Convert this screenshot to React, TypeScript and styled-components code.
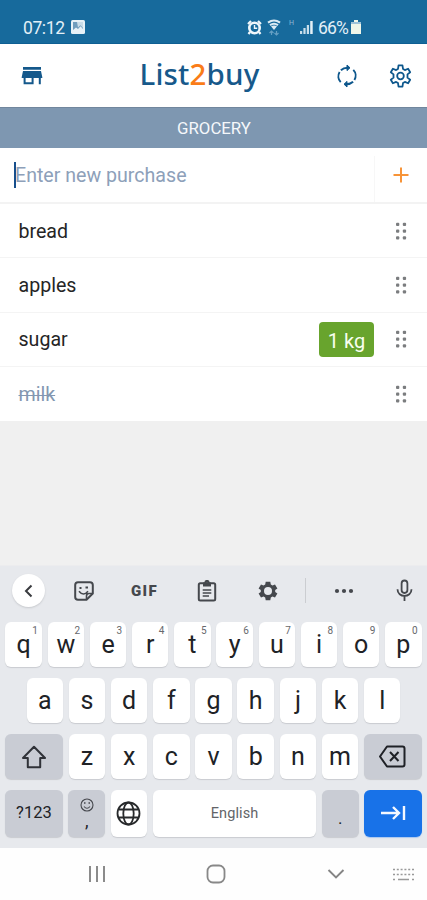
import React from 'react';
import styled, { createGlobalStyle } from 'styled-components';

const GlobalStyle = createGlobalStyle`
  * { box-sizing: border-box; }
  html, body { margin: 0; padding: 0; }
  body { font-family: Roboto, "Liberation Sans", sans-serif; background: #f0f0f0; }
  svg { display: block; flex-shrink: 0; }
`;

const Screen = styled.div`
  width: 427px;
  height: 900px;
  display: flex;
  flex-direction: column;
  overflow: hidden;
  background: #f0f0f0;
`;

const StatusBar = styled.div`
  height: 44px;
  flex-shrink: 0;
  display: flex;
  align-items: center;
  padding: 11px 66px 0 23px;
  background: #176a9c;
  border-bottom: 1px solid #0e5f93;
  color: #e3f0f7;
  font-size: 18px;
`;

const Clock = styled.span`
  width: 48px;
  padding-top: 1px;
  letter-spacing: -0.4px;
  font-size: 17.5px;
`;

const StatusIcons = styled.div`
  margin-left: auto;
  display: flex;
  align-items: center;
`;

const AlarmIcon = styled.svg`
  margin-right: 5px;
`;

const Network = styled.span`
  width: 13px;
  margin-left: 4px;
  margin-right: 2px;
  padding-bottom: 8px;
  text-align: center;
  font-size: 7px;
  color: #8fb8d2;
`;

const Percent = styled.span`
  margin-left: 4px;
  width: 33px;
  padding-top: 1px;
  font-size: 17.5px;
  letter-spacing: -0.8px;
`;

const Header = styled.header`
  height: 63px;
  flex-shrink: 0;
  display: grid;
  grid-template-columns: 63px 1fr 54px 53px;
  align-items: center;
  justify-items: center;
  background: #fff;
  color: #0d578c;
`;

const Logo = styled.h1`
  margin: 0 0 3px;
  padding-left: 16px;
  justify-self: stretch;
  text-align: center;
  font: 500 29.5px/40px "Noto Sans", "Open Sans", sans-serif;
  letter-spacing: 0.15px;
  white-space: nowrap;
  color: #17598b;
  span { color: #fa7c18; }
`;

const Category = styled.div`
  height: 41px;
  flex-shrink: 0;
  display: flex;
  align-items: center;
  justify-content: center;
  padding-left: 1px;
  background: #7e97b1;
  border-top: 1px solid #71869d;
  color: #f5f8fb;
  font-size: 16.8px;
`;

const EntryRow = styled.div`
  height: 56px;
  flex-shrink: 0;
  display: flex;
  background: #fff;
  border-bottom: 2px solid #f3f3f3;
`;

const Entry = styled.div`
  flex: 1;
  display: flex;
  align-items: center;
  padding-left: 14px;
  font-size: 19.6px;
  color: #8da0b9;
`;

const Caret = styled.span`
  width: 2px;
  height: 26px;
  margin-right: -1px;
  background: #174f8c;
`;

const AddButton = styled.div`
  width: 53px;
  margin-top: 8px;
  padding-bottom: 8px;
  border-left: 1px solid #f7f7f7;
  display: flex;
  align-items: center;
  justify-content: center;
`;

const Item = styled.div<{ $done?: boolean }>`
  height: 54.3px;
  flex-shrink: 0;
  display: flex;
  align-items: center;
  padding: 1px 20px 0 18.5px;
  background: #fff;
  border-bottom: 1.5px solid #f4f4f4;
  font-size: 19.6px;
  color: ${p => (p.$done ? '#8397b1' : '#252525')};
  &:last-child { border-bottom-color: #fff; }
`;

const ItemName = styled.span<{ $done?: boolean }>`
  flex: 1;
  text-decoration: ${p => (p.$done ? 'line-through' : 'none')};
  text-decoration-thickness: 1px;
`;

const Amount = styled.span`
  width: 55px;
  height: 35px;
  margin-right: 21px;
  display: flex;
  align-items: center;
  justify-content: center;
  padding-top: 2px;
  border-radius: 4px;
  background: #68a42d;
  color: #f8fff0;
  font-size: 20px;
`;

const Keyboard = styled.div`
  height: 283px;
  margin-top: auto;
  flex-shrink: 0;
  background: #e7e9ed;
  border-top: 1px solid #ececee;
`;

const Tools = styled.div`
  height: 56px;
  padding-bottom: 7px;
  display: grid;
  grid-template-columns: 57px 54px 67px 57px 66px 9px 68px 53px;
  align-items: center;
  justify-items: center;
  color: #45484d;
`;

const BackCircle = styled.div`
  width: 33px;
  height: 33px;
  border-radius: 50%;
  background: #fff;
  box-shadow: 0 1px 2px #c7c9cd;
  display: flex;
  align-items: center;
  justify-content: center;
`;

const Gif = styled.b`
  font: 900 15px/20px Roboto, sans-serif;
  letter-spacing: 1.3px;
`;

const Separator = styled.i`
  width: 1px;
  height: 25px;
  background: #cbcdd1;
`;

const Keys = styled.div`
  display: grid;
  row-gap: 11px;
`;

const KeyRow = styled.div`
  display: flex;
  justify-content: center;
  gap: 5.8px;
`;

const Key = styled.div<{ $w?: number; $tone?: 'grey' | 'blue'; $size?: number; $tall?: boolean }>`
  position: relative;
  width: ${p => p.$w ?? 36.4}px;
  height: ${p => (p.$tall ? 46.5 : 45)}px;
  flex-shrink: 0;
  display: flex;
  flex-direction: column;
  align-items: center;
  justify-content: center;
  border-radius: 6px;
  background: ${p => (p.$tone === 'blue' ? '#1872e8' : p.$tone === 'grey' ? '#c9ccd4' : '#fff')};
  box-shadow: 0 1px 1px ${p => (p.$tone === 'blue' ? '#a9c7ef' : '#c9cbd0')};
  color: #202226;
  font-size: ${p => p.$size ?? 25}px;
  line-height: 28px;
`;

const Digit = styled.sup`
  position: absolute;
  top: 3px;
  right: 4px;
  font-size: 10px;
  line-height: 11px;
  color: #66686c;
`;

const Comma = styled.span`
  margin-top: 2px;
  font-size: 18px;
  line-height: 14px;
`;

const Period = styled.span`
  padding-top: 9px;
  font-size: 17px;
`;

const SpaceLabel = styled.span`
  padding-top: 2px;
  color: #626468;
  font-size: 14.5px;
  letter-spacing: 0.1px;
`;

const NavBar = styled.nav`
  height: 52px;
  flex-shrink: 0;
  padding-left: 36px;
  display: grid;
  grid-template-columns: 121px 118px 121px 15px;
  align-items: center;
  justify-items: center;
  background: #fefefe;
`;

const stroke = (color = 'currentColor', width = 2) => ({
  fill: 'none', stroke: color, strokeWidth: width,
});

const DragHandle = () => (
  <svg width="12" height="19" viewBox="0 0 12 19" fill="#7b7d7f">
    {[2.5, 9.2, 16].map(y => [2.7, 9.5].map(x => <rect key={`${x}-${y}`} x={x - 1.7} y={y - 1.7} width="3.3" height="3.3" rx="1" />))}
  </svg>
);

const GearOutline = () => (
  <svg width="25" height="26" viewBox="0 0 24 24" {...stroke('currentColor', 1.7)} strokeLinejoin="round">
    <path d="M9.6 5.2 10.1 1.8h3.8l.5 3.4 1.8 1.1 3.1-1.3 2 3.4-2.6 2v3.2l2.6 2-2 3.4-3.1-1.3-1.8 1.1-.5 3.4h-3.8l-.5-3.4-1.8-1.1L4.7 19l-2-3.4 2.6-2v-3.2l-2.6-2 2-3.4 3.1 1.3z" />
    <circle cx="12" cy="12" r="3.2" />
  </svg>
);

const items = [
  { name: 'bread' },
  { name: 'apples' },
  { name: 'sugar', amount: '1 kg' },
  { name: 'milk', done: true },
];

export default function App() {
  return (
    <Screen>
      <GlobalStyle />
      <StatusBar>
        <Clock>07:12</Clock>
        <svg width="14" height="14" viewBox="0 0 14 14">
          <rect width="14" height="14" rx="1.5" fill="#e6f1f7" />
          <path d="M2 2h10v7L9.6 6.2 7 9 5 7.5 2 10z" fill="#6f9dbd" />
          <path d="M6 2h6v6L9.4 5.2 7 7.4z" fill="#c8dce8" />
        </svg>
        <StatusIcons>
          <AlarmIcon width="15" height="15" viewBox="0 0 15 15">
            <circle cx="7.5" cy="8" r="5.2" fill="none" stroke="#f0f7fb" strokeWidth="2.6" />
            <path d="M1 4 4 1M14 4l-3-3M3 12l-1.5 2M12 12l1.5 2" stroke="#f0f7fb" strokeWidth="2.2" />
            <path d="M7.5 5v3.3h2.7" {...stroke('#f0f7fb', 1.4)} />
          </AlarmIcon>
          <svg width="14" height="17" viewBox="0 0 14 17">
            <path d="M1 3.7Q7-.6 13 3.7M3 6.2q4-2.8 8 0" {...stroke('#dcebf4', 2.1)} />
            <path d="m4 7.3 3 3.6 3-3.6q-3-1.7-6 0" fill="#dcebf4" />
            <path d="m2.5 14 2-2 2 2m-2-2v4m3-2 2 2 2-2m-2 2v-4" {...stroke('#659fc3', 1.2)} />
          </svg>
          <Network>H</Network>
          <svg width="14" height="14" viewBox="0 0 14 14" fill="#cadfeb">
            <path d="M0 11h2.2v3H0zM3.4 8h2.2v6H3.4zM6.8 5H9v9H6.8z" />
            <path d="M10.2 1h2.5v13h-2.5z" fill="#e4f0f6" />
          </svg>
          <Percent>66%</Percent>
          <svg width="10" height="14" viewBox="0 0 10 14">
            <path d="M3 0h4v2h3v12H0V2h3z" fill="#f0f6e9" />
            <path d="M0 2h10v2H0z" fill="#9fc3d8" />
          </svg>
        </StatusIcons>
      </StatusBar>

      <Header>
        <svg width="22" height="20" viewBox="0 0 22 20" fill="#14588b">
          <path d="M2 1h18v2.7H2zM2 5h18l1.3 6.2V12H.7v-.8z" />
          <path d="M2.6 11h2v5.2h6V11h2v7.2h-10zM17.8 11h2v7.2h-2z" />
        </svg>
        <Logo>List<span>2</span>buy</Logo>
        <svg width="22" height="24" viewBox="0 0 22 24" {...stroke('currentColor', 1.9)}>
          <path d="M4.7 18.2A8.3 8.3 0 0 1 3.6 8.1M4.9 6.2Q7.5 3.7 12 3.8M17.3 5.8a8.3 8.3 0 0 1 1.1 10.1M17.1 17.8Q14.5 20.3 10 20.2" />
          <path d="m11 1 3 2.8-3 2.8zM11 17.4l-3 2.8 3 2.8z" fill="currentColor" strokeWidth="1" />
        </svg>
        <GearOutline />
      </Header>

      <Category>GROCERY</Category>
      <EntryRow>
        <Entry><Caret />Enter new purchase</Entry>
        <AddButton>
          <svg width="16" height="16" viewBox="0 0 16 16"><path d="M8 .5v15M.5 8h15" {...stroke('#f79438', 2)} /></svg>
        </AddButton>
      </EntryRow>
      <div>
        {items.map(item => (
          <Item key={item.name} $done={item.done}>
            <ItemName $done={item.done}>{item.name}</ItemName>
            {item.amount && <Amount>{item.amount}</Amount>}
            <DragHandle />
          </Item>
        ))}
      </div>

      <Keyboard>
        <Tools>
          <BackCircle>
            <svg width="10" height="14" viewBox="0 0 10 14"><path d="M7.5 1.5 2 7l5.5 5.5" {...stroke('#393b3f', 2)} /></svg>
          </BackCircle>
          <svg width="20" height="20" viewBox="0 0 20 20" {...stroke()} strokeLinejoin="round">
            <path d="M4 1.2h12q2.8 0 2.8 2.8v8.5l-6.3 6.3H4q-2.8 0-2.8-2.8V4Q1.2 1.2 4 1.2z" />
            <path d="M12.5 18v-3q0-2.5 2.5-2.5h3M5 10.2q4.5 5.6 9 0" strokeWidth="1.6" />
            <path d="M5.5 7h2M11.5 6.5H14" />
          </svg>
          <Gif>GIF</Gif>
          <svg width="20" height="22" viewBox="0 0 20 22" {...stroke()}>
            <rect x="1.8" y="3.2" width="16.4" height="17.2" rx="1.5" />
            <path d="M6 2.5h8v4H6z" fill="currentColor" stroke="none" />
            <circle cx="10" cy="2.5" r="1.6" />
            <path d="M5.7 10h8.6M5.7 13h8.6M5.7 16H12" strokeWidth="1.5" />
          </svg>
          <svg width="20" height="20" viewBox="0 0 20 20">
            <path fill="currentColor" fillRule="evenodd" d="m7.7.8-.5 2.7L5.5 4.5 3 3.5.6 7.4 2.8 9v2L.6 12.6 3 16.5l2.5-1 1.7 1 .5 2.7h4.6l.5-2.7 1.7-1 2.5 1 2.4-3.9-2.2-1.6V9l2.2-1.6L17 3.5l-2.5 1-1.7-1-.5-2.7zM10 6a4 4 0 1 1 0 8 4 4 0 0 1 0-8" />
          </svg>
          <Separator />
          <svg width="20" height="6" viewBox="0 0 20 6" fill="currentColor"><circle cx="3" cy="3" r="2.1" /><circle cx="10" cy="3" r="2.1" /><circle cx="17" cy="3" r="2.1" /></svg>
          <svg width="17" height="23" viewBox="0 0 17 23" {...stroke('currentColor', 1.8)}>
            <rect x="5.6" y="1.5" width="5.8" height="12.5" rx="2.9" />
            <path d="M1.5 10.2c0 9 14 9 14 0M8.5 17v5" />
          </svg>
        </Tools>
        <Keys>
          <KeyRow>{[...'qwertyuiop'].map((c, i) => <Key key={c}>{c}<Digit>{(i + 1) % 10}</Digit></Key>)}</KeyRow>
          <KeyRow>{[...'asdfghjkl'].map(c => <Key key={c}>{c}</Key>)}</KeyRow>
          <KeyRow>
            <Key $w={57.5} $tone="grey">
              <svg width="26" height="24" viewBox="0 0 26 24"><path d="M13 1.8 24 13h-4.8v9.2H6.8V13H2z" {...stroke('#303238', 2)} strokeLinejoin="round" /></svg>
            </Key>
            {[...'zxcvbnm'].map(c => <Key key={c}>{c}</Key>)}
            <Key $w={57.5} $tone="grey">
              <svg width="29" height="23" viewBox="0 0 29 23" {...stroke('#1f2126', 2)}>
                <path d="M9 1.5h15.5q2 0 2 2v16q0 2-2 2H9L2 11.5z" strokeLinejoin="round" /><path d="m12 7 8.5 9m0-9L12 16" />
              </svg>
            </Key>
          </KeyRow>
          <KeyRow>
            <Key $w={57.5} $tone="grey" $size={16.5} $tall>?123</Key>
            <Key $tone="grey" $tall>
              <svg width="14" height="14" viewBox="0 0 14 14" {...stroke('#45474d', 1.1)}>
                <circle cx="7" cy="7" r="6" /><path d="M4 8.5q3 3.5 6 0" /><path d="M4 5h1.5M8.5 5H10" strokeWidth="1.5" />
              </svg>
              <Comma>,</Comma>
            </Key>
            <Key $tall>
              <svg width="25" height="25" viewBox="0 0 25 25" {...stroke('#27292b', 1.8)}>
                <circle cx="12.5" cy="12.5" r="11" /><ellipse cx="12.5" cy="12.5" rx="5.2" ry="11" /><path d="M2.3 8.5h20.4M2.3 16.5h20.4" />
              </svg>
            </Key>
            <Key $w={163.5} $tall><SpaceLabel>English</SpaceLabel></Key>
            <Key $tone="grey" $tall><Period>.</Period></Key>
            <Key $w={57.5} $tone="blue" $tall>
              <svg width="26" height="18" viewBox="0 0 26 18"><path d="M1 9h18M13 3l6 6-6 6M24 2v14" {...stroke('#f4f8ff', 2.4)} /></svg>
            </Key>
          </KeyRow>
        </Keys>
      </Keyboard>

      <NavBar>
        <svg width="18" height="18" viewBox="0 0 18 18"><path d="M2 1v16M9 1v16M16 1v16" {...stroke('#8b8b8b', 2)} /></svg>
        <svg width="20" height="20" viewBox="0 0 20 20"><rect x="1.5" y="1.5" width="17" height="17" rx="5.5" {...stroke('#888', 1.8)} /></svg>
        <svg width="18" height="12" viewBox="0 0 18 12"><path d="m1.5 2 7.5 7.5L16.5 2" {...stroke('#858585', 1.9)} /></svg>
        <svg width="21" height="13" viewBox="0 0 21 13" {...stroke('#999', 1.7)}>
          <path d="M0 1.5h21M0 6.5h21" strokeDasharray="2 1.8" /><path d="M0 11.5h2M5 11.5h11M19 11.5h2" />
        </svg>
      </NavBar>
    </Screen>
  );
}
